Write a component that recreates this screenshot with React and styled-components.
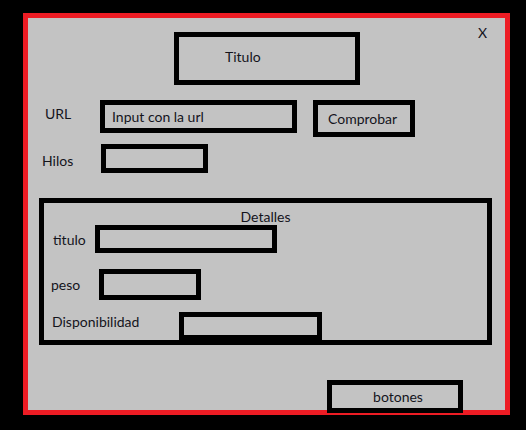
import React from 'react'
import styled, { createGlobalStyle } from 'styled-components'

const Global = createGlobalStyle`
  html, body {
    margin: 0;
    background: #000;
  }
  body {
    font-family: Lato, "Open Sans", sans-serif;
    font-size: 14px;
    color: #14141c;
  }
`

const Window = styled.div`
  box-sizing: border-box;
  width: 487px;
  height: 402px;
  margin: 13px 0 0 23px;
  border: 5px solid #ed1c24;
  background: #c3c3c3;
  display: flex;
  flex-direction: column;
`

const Header = styled.div`
  display: flex;
  align-items: flex-start;
`

const Box = styled.div`
  box-sizing: border-box;
  border: 5px solid #000;
  width: ${p => p.$w}px;
  height: ${p => p.$h}px;
  display: flex;
  align-items: center;
  padding-left: ${p => p.$pl || 0}px;
  padding-bottom: 1px;
  flex-shrink: 0;
`

const TitleBox = styled(Box)`
  margin: 14px 0 0 146px;
  padding-bottom: 4px;
`

const Close = styled.span`
  margin: 6px 18px 0 auto;
  line-height: 18px;
`

const Row = styled.div`
  display: flex;
  align-items: flex-start;
  margin-top: ${p => p.$mt || 0}px;
`

const Label = styled.span`
  box-sizing: border-box;
  width: ${p => p.$w}px;
  padding-left: ${p => p.$pl}px;
  margin-top: ${p => p.$top}px;
  line-height: 18px;
  flex-shrink: 0;
`

const Button = styled(Box)`
  margin-left: 16px;
`

const Details = styled.div`
  box-sizing: border-box;
  width: 453px;
  height: 147px;
  margin: 25px 0 0 11px;
  border: 5px solid #000;
  display: flex;
  flex-direction: column;
`

const Legend = styled.div`
  height: 22px;
  padding-top: 5px;
  box-sizing: border-box;
  line-height: 17px;
  text-align: center;
`

const Footer = styled(Box)`
  margin: 35px 0 0 299px;
  justify-content: center;
`

export default function App() {
  return (
    <>
      <Global />
      <Window>
        <Header>
          <TitleBox $w={186} $h={53} $pl={46}>Titulo</TitleBox>
          <Close>X</Close>
        </Header>

        <Row $mt={15}>
          <Label $w={72} $pl={17} $top={5}>URL</Label>
          <Box $w={197} $h={33} $pl={7}>Input con la url</Box>
          <Button $w={102} $h={37} $pl={10}>Comprobar</Button>
        </Row>

        <Row $mt={7}>
          <Label $w={73} $pl={14} $top={8}>Hilos</Label>
          <Box $w={107} $h={29} />
        </Row>

        <Details>
          <Legend>Detalles</Legend>
          <Row>
            <Label $w={51} $pl={9} $top={6}>titulo</Label>
            <Box $w={182} $h={28} />
          </Row>
          <Row $mt={16}>
            <Label $w={55} $pl={7} $top={7}>peso</Label>
            <Box $w={102} $h={31} />
          </Row>
          <Row $mt={12}>
            <Label $w={135} $pl={8} $top={1}>Disponibilidad</Label>
            <Box $w={143} $h={28} />
          </Row>
        </Details>

        <Footer $w={136} $h={33} $pl={6}>botones</Footer>
      </Window>
    </>
  )
}
